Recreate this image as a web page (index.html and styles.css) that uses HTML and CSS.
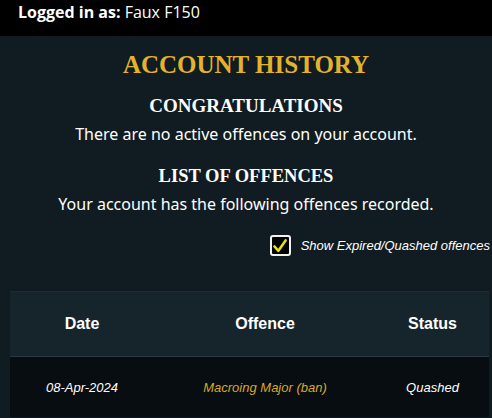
FILE: index.html
```html
<!DOCTYPE html>
<html>
<head>
<meta charset="utf-8">
<link rel="stylesheet" href="styles.css">
</head>
<body>
<div class="topbar"><b>Logged in as:</b> Faux F150</div>
<main class="content">
  <h1 class="title">Account History</h1>
  <h2 class="subtitle">Congratulations</h2>
  <p class="text">There are no active offences on your account.</p>
  <h2 class="subtitle second">List of Offences</h2>
  <p class="text">Your account has the following offences recorded.</p>
  <div class="toggle">
    <span class="checkbox">
      <svg viewBox="0 0 20 20" width="16" height="16"><path d="M3 10.5 L8 16 L17 3" fill="none" stroke="#e6df0c" stroke-width="3.2" stroke-linecap="round" stroke-linejoin="round"/></svg>
    </span>
    <span class="toggle-label">Show Expired/Quashed offences</span>
  </div>
  <table class="offences">
    <thead>
      <tr><th class="c-date">Date</th><th class="c-off">Offence</th><th class="c-status">Status</th></tr>
    </thead>
    <tbody>
      <tr><td>08-Apr-2024</td><td class="gold">Macroing Major (ban)</td><td>Quashed</td></tr>
    </tbody>
  </table>
</main>
</body>
</html>
```
FILE: styles.css
```css
html, body {
  margin: 0;
  padding: 0;
  background: #111c22;
  height: 100%;
  overflow: hidden;
}
body {
  font-family: "Noto Sans", "Open Sans", sans-serif;
  color: #fff;
}
.topbar {
  background: #000;
  height: 36px;
  box-sizing: border-box;
  padding: 2px 0 0 18px;
  font-size: 16px;
  line-height: 20px;
  font-family: "Open Sans", sans-serif;
}
.topbar b { font-weight: 700; }
.content {
  display: flex;
  flex-direction: column;
  align-items: center;
}
.title {
  margin: 14px 0 0;
  font-family: "Liberation Serif", serif;
  font-weight: 700;
  text-transform: uppercase;
  color: #e3b32c;
  font-size: 25px;
  line-height: 30px;
}
.subtitle {
  margin: 14px 0 0;
  font-family: "Liberation Serif", serif;
  font-weight: 700;
  text-transform: uppercase;
  font-size: 19px;
  line-height: 24px;
  color: #fff;
}
.subtitle.second { margin-top: 19px; font-size: 18.5px; }
.text {
  margin: 5px 0 0;
  font-size: 16px;
  line-height: 22px;
}
.toggle {
  align-self: flex-end;
  display: flex;
  align-items: center;
  gap: 10px;
  margin: 20px 2px 0 0;
}
.checkbox {
  width: 17px;
  height: 17px;
  border: 2px solid #f2f2f2;
  border-radius: 3px;
  background: #000;
  display: flex;
  align-items: center;
  justify-content: center;
}
.toggle-label {
  font-family: "Liberation Sans", Arial, sans-serif;
  font-style: italic;
  font-size: 13px;
  color: #fff;
}
.offences {
  align-self: stretch;
  margin: 35px 3px 0 10px;
  border-collapse: collapse;
  font-family: "Liberation Sans", Arial, sans-serif;
}
.offences th {
  background: #16242c;
  height: 64px;
  font-size: 16px;
  font-weight: 700;
  border-top: 1px solid #1c2c35;
  border-bottom: 1px solid #2b3b45;
  padding: 0;
}
.c-date { width: 144px; }
.c-off { width: 222px; }
.offences td {
  background: #070d10;
  height: 60px;
  text-align: center;
  font-style: italic;
  font-size: 13px;
  padding: 0;
}
.gold { color: #dba727; }
```
